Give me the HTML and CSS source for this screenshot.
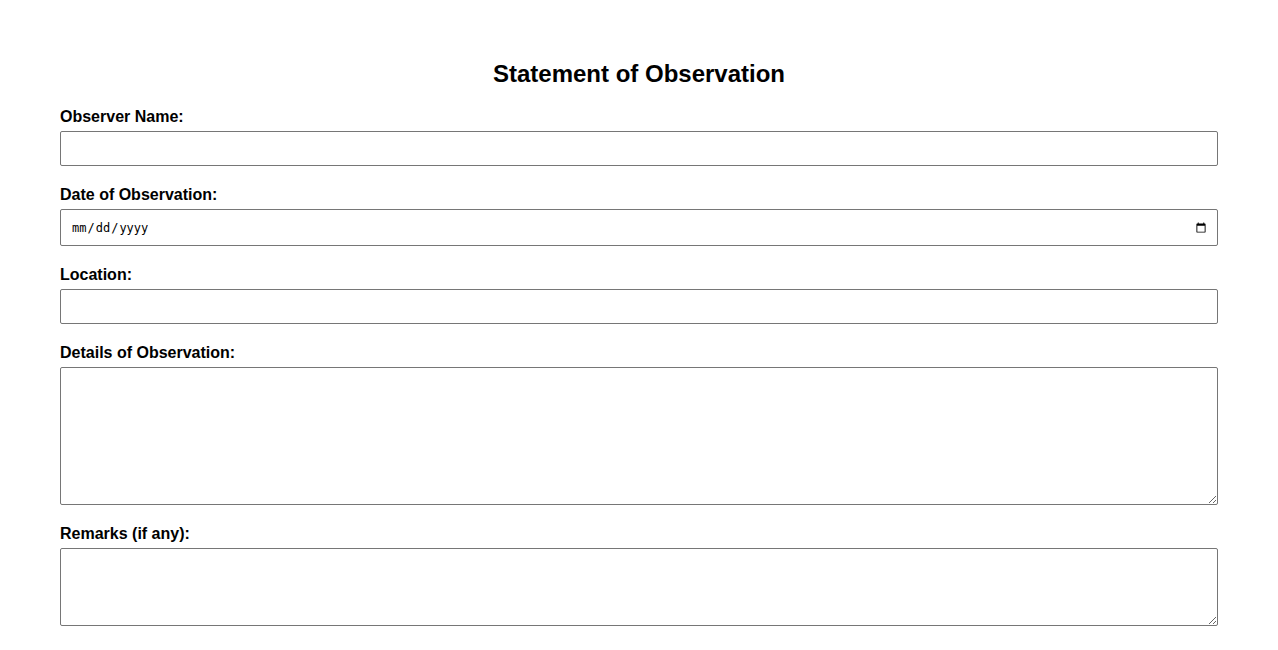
FILE: index.html
```html
<!DOCTYPE html>
<html lang="en">
<head>
<meta charset="utf-8">
<title>Statement of Observation</title>
<link rel="stylesheet" href="styles.css">
</head>
<body>
<main class="page">
  <h1 class="title">Statement of Observation</h1>
  <form class="form">
    <div class="field">
      <label class="label" for="observer">Observer Name:</label>
      <input class="input" type="text" id="observer">
    </div>
    <div class="field">
      <label class="label" for="date">Date of Observation:</label>
      <input class="input input-date" type="date" id="date">
    </div>
    <div class="field">
      <label class="label" for="location">Location:</label>
      <input class="input" type="text" id="location">
    </div>
    <div class="field">
      <label class="label" for="details">Details of Observation:</label>
      <textarea class="textarea textarea-lg" id="details"></textarea>
    </div>
    <div class="field">
      <label class="label" for="remarks">Remarks (if any):</label>
      <textarea class="textarea textarea-sm" id="remarks"></textarea>
    </div>
  </form>
</main>
</body>
</html>
```

FILE: styles.css
```css
html, body {
  margin: 0;
  padding: 0;
  background: #ffffff;
}

body {
  font-family: "Liberation Sans", Arial, sans-serif;
  color: #000000;
}

.page {
  padding: 60px 60px 20px;
}

.title {
  margin: 0 0 19px;
  font-size: 24px;
  font-weight: bold;
  text-align: center;
  line-height: 28px;
}

.form {
  display: flex;
  flex-direction: column;
  gap: 19px;
}

.field {
  display: flex;
  flex-direction: column;
}

.label {
  display: block;
  font-size: 16px;
  font-weight: bold;
  line-height: 20px;
  height: 20px;
  margin-bottom: 4px;
}

.input,
.textarea {
  display: block;
  box-sizing: border-box;
  width: 100%;
  margin: 0;
  border: 1px solid #767676;
  border-radius: 2px;
  background: #ffffff;
  padding: 8px;
  flex: none;
}

.input {
  height: 35px;
}

.input-date {
  height: 37px;
  min-height: 37px;
  max-height: 37px;
  padding: 0 8px 0 10px;
  font-family: "DejaVu Sans Mono", monospace;
  font-size: 12px;
}

.textarea {
  resize: vertical;
}

.textarea-lg {
  height: 138px;
}

.textarea-sm {
  height: 78px;
}
```
